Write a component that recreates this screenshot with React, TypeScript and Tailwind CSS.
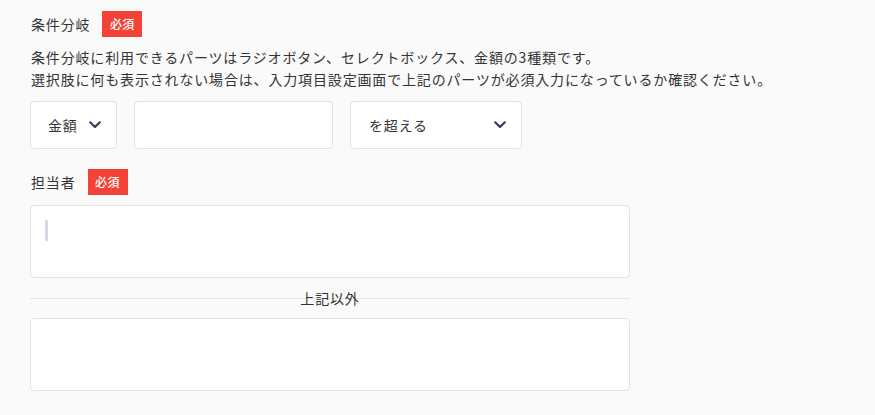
import React from 'react';

const font = { fontFamily: '"Noto Sans CJK JP", "Noto Sans", sans-serif' };

const Required = () => (
  <span className="inline-flex h-[26px] w-[40px] items-center justify-center bg-[#f44336] text-[12px] font-medium tracking-[0.04em] text-white">
    必須
  </span>
);

const Chevron = () => (
  <svg width="12" height="8" viewBox="0 0 12 8" fill="none" className="shrink-0">
    <path d="M1.2 1.3L6 6l4.8-4.7" stroke="#363d55" strokeWidth="2.2" strokeLinecap="round" strokeLinejoin="round" />
  </svg>
);

const SelectBox = ({ label, className }: { label: string; className: string }) => (
  <div className={`flex h-[48px] items-center justify-between rounded-[4px] border border-[#e3e3e3] bg-white pl-[17px] pr-[15px] ${className}`}>
    <span>{label}</span>
    <Chevron />
  </div>
);

const App = () => {
  return (
    <div
      className="min-h-[415px] w-[875px] bg-[#fafafa] pl-[30px] pt-[11px] text-[14px] tracking-[0.06em] text-[#333333]"
      style={font}
    >
      <div className="flex items-center gap-[12px]">
        <span className="pl-px">条件分岐</span>
        <Required />
      </div>
      <p className="mt-[9px] pl-px leading-[22px]">
        条件分岐に利用できるパーツはラジオボタン、セレクトボックス、金額の3種類です。
        <br />
        選択肢に何も表示されない場合は、入力項目設定画面で上記のパーツが必須入力になっているか確認ください。
      </p>

      <div className="mt-[11px] flex gap-[17px]">
        <SelectBox label="金額" className="w-[87px]" />
        <div className="h-[48px] w-[199px] rounded-[4px] border border-[#e3e3e3] bg-white" />
        <SelectBox label="を超える" className="w-[172px] pl-[18px]" />
      </div>

      <div className="mt-[20px] flex items-center gap-[12px]">
        <span className="pl-px">担当者</span>
        <Required />
      </div>

      <div className="mt-[10px] h-[73px] w-[600px] rounded-[4px] border border-[#e3e3e3] bg-white pl-[14px] pt-[14px]">
        <div className="h-[21px] w-[3px] bg-[#d8d5ef]" />
      </div>

      <div className="mt-[10px] grid h-[20px] w-[600px]">
        <div className="col-start-1 row-start-1 h-px self-center bg-[#e3e3e3]" />
        <span className="col-start-1 row-start-1 self-center justify-self-center leading-[20px]">上記以外</span>
      </div>

      <div className="mt-[10px] h-[73px] w-[600px] rounded-[4px] border border-[#e3e3e3] bg-white" />
    </div>
  );
};

export default App;
